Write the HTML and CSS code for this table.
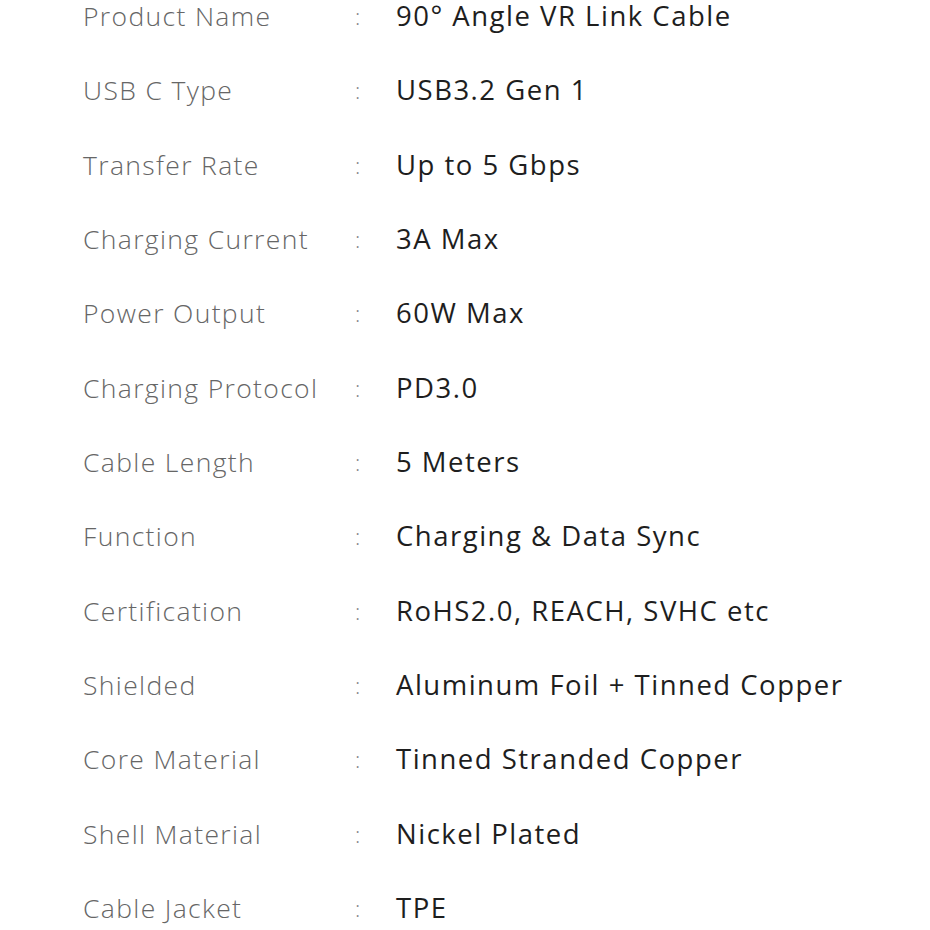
FILE: index.html
```html
<!DOCTYPE html>
<html>
<head>
<meta charset="utf-8">
<link rel="stylesheet" href="styles.css">
</head>
<body>
<div class="specs">
  <div class="row"><span class="label">Product Name</span><span class="colon">:</span><span class="value">90° Angle VR Link Cable</span></div>
  <div class="row"><span class="label">USB C Type</span><span class="colon">:</span><span class="value">USB3.2 Gen 1</span></div>
  <div class="row"><span class="label">Transfer Rate</span><span class="colon">:</span><span class="value">Up to 5 Gbps</span></div>
  <div class="row"><span class="label">Charging Current</span><span class="colon">:</span><span class="value">3A Max</span></div>
  <div class="row"><span class="label">Power Output</span><span class="colon">:</span><span class="value">60W Max</span></div>
  <div class="row"><span class="label">Charging Protocol</span><span class="colon">:</span><span class="value">PD3.0</span></div>
  <div class="row"><span class="label">Cable Length</span><span class="colon">:</span><span class="value">5 Meters</span></div>
  <div class="row"><span class="label">Function</span><span class="colon">:</span><span class="value">Charging &amp; Data Sync</span></div>
  <div class="row"><span class="label">Certification</span><span class="colon">:</span><span class="value">RoHS2.0, REACH, SVHC etc</span></div>
  <div class="row"><span class="label">Shielded</span><span class="colon">:</span><span class="value">Aluminum Foil + Tinned Copper</span></div>
  <div class="row"><span class="label">Core Material</span><span class="colon">:</span><span class="value">Tinned Stranded Copper</span></div>
  <div class="row"><span class="label">Shell Material</span><span class="colon">:</span><span class="value">Nickel Plated</span></div>
  <div class="row"><span class="label">Cable Jacket</span><span class="colon">:</span><span class="value">TPE</span></div>
</div>
</body>
</html>
```
FILE: styles.css
```css
html, body {
  margin: 0;
  padding: 0;
  background: #ffffff;
}
body {
  font-family: "Open Sans", "Liberation Sans", sans-serif;
  width: 930px;
  height: 930px;
  overflow: hidden;
}
.specs {
  display: flex;
  flex-direction: column;
  gap: 42.33px;
  padding-left: 83px;
  padding-top: 0;
}
.row {
  display: grid;
  grid-template-columns: 272px 41px 1fr;
  height: 32px;
  line-height: 32px;
  align-items: center;
}
.label {
  font-size: 26.5px;
  font-weight: 300;
  color: #666666;
  letter-spacing: 1.35px;
  white-space: nowrap;
}
.colon {
  font-size: 22px;
  font-weight: 300;
  color: #888;
}
.value {
  font-size: 27.5px;
  font-weight: 400;
  color: #1e1e1e;
  letter-spacing: 1.5px;
  white-space: nowrap;
}
```
